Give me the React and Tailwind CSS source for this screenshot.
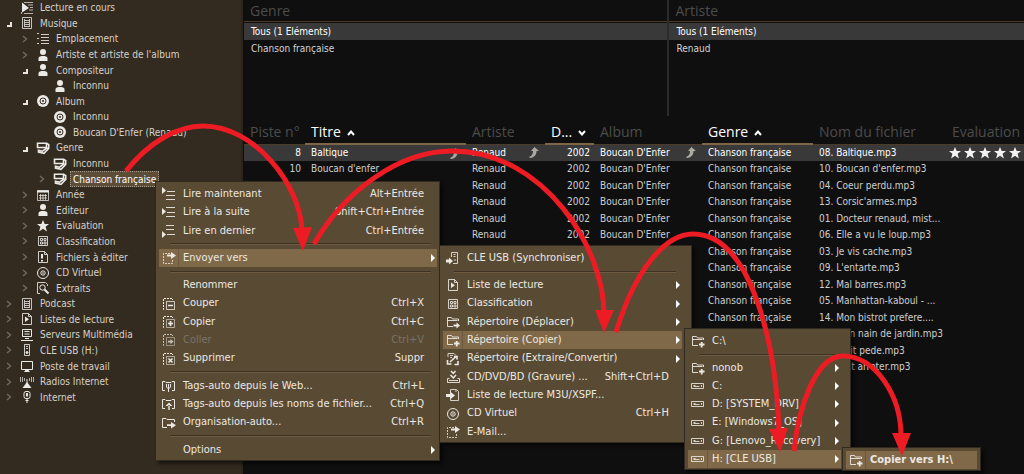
import React from 'react'
import clsx from 'clsx'

const icons = {
  playing: (
    <>
      <path d="M4 1.500h9M8 4h5M10 6.500h3M9 9h4M4 12.500h9M1.500 11v2" opacity=".7" />
      <path d="M2 1.500 9 7l-7 4.500z" fill="currentColor" stroke="none" />
    </>
  ),
  library: <path d="M2.500 1.500h9v11h-9zM5 4.500h4M5 6.500h4M5 8.500h4M5 10.500h4M4.500 3v8M9.500 3v8" opacity=".8" />,
  list: <path d="M1 1.500h2M1 6.500h2M1 11.500h2M5 2.500h8M5 5.500h8M5 8.500h8M5 11.500h8" opacity=".85" />,
  person: (
    <g fill="currentColor" stroke="none">
      <circle cx="7" cy="4" r="3" />
      <path d="M2.500 13v-2.500C2.500 8.500 5 8 7 8s4.500.5 4.500 2.500V13z" />
    </g>
  ),
  disc: (
    <>
      <circle cx="7" cy="7" r="6" fill="currentColor" stroke="none" />
      <circle cx="7" cy="7" r="3" className="stroke-[#332b20]" />
      <circle cx="7" cy="7" r="1" className="fill-[#332b20] stroke-none" />
    </>
  ),
  tag: (
    <>
      <path d="M1.500 2.200h9v4.300h-9z" strokeWidth="1.600" />
      <path d="m10.500 2.500 2.200 1v4L8 12.300 2.500 11V9.200l4 1 5-3.700" strokeWidth="1.600" />
    </>
  ),
  calendar: (
    <>
      <path d="M1.500 2.500h11v10h-11zM3 7.500h8M3 10h8M4.500 6v6M7 6v6M9.500 6v6" opacity=".75" />
      <path d="M1 3.500h12" strokeWidth="2" />
    </>
  ),
  star: <path d="m7 1 1.700 4h4.300L9.600 7.800l1.300 4.700L7 9.800l-3.900 2.700 1.300-4.700L1 5h4.300z" fill="currentColor" stroke="none" />,
  grid: <path d="M2.500 2.500h9v9h-9zM4.500 4.500h2v2h-2zM8 4.500h2v2H8zM4.500 8h2v2h-2zM8 8h2v2H8z" opacity=".85" />,
  edit: (
    <>
      <path d="M2.500 1.500h6l3 3v8h-9zM8.500 1.500v3h3" opacity=".85" />
      <path d="M6 4v4.500M6 10v1.500" strokeWidth="2" />
    </>
  ),
  cd: (
    <>
      <circle cx="7" cy="7" r="5.500" />
      <circle cx="7" cy="7" r="2.200" />
      <circle cx="7" cy="7" r=".8" fill="currentColor" stroke="none" />
    </>
  ),
  search: (
    <>
      <path d="M4 12.500H1.500v-11h8l2 2V5" opacity=".85" />
      <circle cx="6.500" cy="6.500" r="2.700" />
      <path d="m8.500 8.500 4 4" strokeWidth="2" />
    </>
  ),
  playlist: (
    <>
      <path d="M2.500 1.500h6l3 3v8h-9zM8.500 1.500v3h3" opacity=".85" />
      <path d="m5 4.500 4 2.800L5 10z" fill="currentColor" stroke="none" />
    </>
  ),
  server: <path d="M2.500 1.500h9v7h-9zM4.500 3.500h5M4.500 6h5M5 10.500h4M1 12.500h12" />,
  usb: (
    <>
      <path d="M4.500 1.500h5v11h-5zM6 3.500h2M6 5.500h2" opacity=".85" />
      <circle cx="7" cy="9.500" r="1" fill="currentColor" />
    </>
  ),
  screen: (
    <>
      <path d="M1.500 2.500h11v8h-11z" />
      <path d="M4 13h6l-1.500-2h-3z" fill="currentColor" stroke="none" />
    </>
  ),
  radio: (
    <>
      <path d="M.5 2v5M2.500 2v5M4.500 3v3M9.500 3v3M11.500 2v5M13.500 2v5" opacity=".7" />
      <path d="M7 4v4" />
      <path d="m2.500 13 4.500-6 4.500 6z" fill="currentColor" stroke="none" />
    </>
  ),
  plug: (
    <>
      <rect x="4" y="1.500" width="6" height="7" rx="2" />
      <path d="M6.500 3v3.500M7.500 3v3.500M5.500 10.500h3M7 9v4" />
    </>
  ),
  playNow: (
    <>
      <path d="M5 4.500h8M4 8.500h9M4 12.500h9" opacity=".9" />
      <path d="m0 0 4 3.500L0 7z" fill="currentColor" stroke="none" />
    </>
  ),
  playNext: (
    <>
      <path d="M4 2.500h9M5 7.500h8M4 11.500h9" opacity=".9" />
      <path d="m0 3 4 3.500L0 10z" fill="currentColor" stroke="none" />
    </>
  ),
  playLast: (
    <>
      <path d="M4 1.500h8M4 5.500h8M5 10.500h8" opacity=".9" />
      <path d="m0 7 4 3.500L0 14z" fill="currentColor" stroke="none" />
    </>
  ),
  send: (
    <>
      <path d="M8 2.500H1.500v10h9V8" strokeDasharray="2 1" opacity=".8" />
      <path d="M5 3.500h4V1l5 3.500L9 8V5.500H5z" fill="currentColor" stroke="none" />
    </>
  ),
  cut: (
    <>
      <path d="M2 12.500h-.5v-11h9V3" strokeDasharray="2 1" />
      <path d="M4.500 4.500h8v8h-8z" opacity=".8" />
      <path d="M6 8.500h5" strokeWidth="1.500" />
    </>
  ),
  copy: (
    <>
      <path d="M2 12.500h-.5v-11h9V3" strokeDasharray="2 1" />
      <path d="M4.500 4.500h8v8h-8z" opacity=".6" />
      <path d="M6 8.500h5M8.500 6v5" strokeWidth="1.700" />
    </>
  ),
  paste: (
    <>
      <path d="M2 12.500h-.5v-11h9V3" strokeDasharray="2 1" />
      <path d="M4.500 4.500h8v8h-8z" opacity=".6" />
      <path d="M6 7.800h2.500V6l3 2.600-3 2.600V9.400H6z" fill="currentColor" stroke="none" />
    </>
  ),
  remove: (
    <>
      <path d="M2 12.500h-.5v-11h9V3" strokeDasharray="2 1" />
      <path d="M4.500 4.500h8v8h-8z" opacity=".6" />
      <path d="m6.500 6.500 4 4M10.500 6.500l-4 4" strokeWidth="1.600" />
    </>
  ),
  tagWeb: (
    <>
      <path d="M3 11.500H.5v-9H3l1 1h5l1-1h2.500v9H10" />
      <path d="M4.500 5v3l2 2 2-2V5M6.500 5v8" />
    </>
  ),
  tagFile: (
    <>
      <path d="M3 11.500H.5v-9H3l1 1h5l1-1h2.500v9H10" />
      <path d="M3.500 9 7 5.500 10.500 9zM6.300 8v5h1.400V8z" fill="currentColor" stroke="none" />
    </>
  ),
  organize: (
    <>
      <path d="M5 11.500H.5v-9H4l1 1h7.500V6" />
      <path d="M5 8.300h4V6l5 3.200-5 3.300V10H5z" fill="currentColor" stroke="none" />
    </>
  ),
  usbSync: (
    <>
      <path d="M5.500 6V1.500h6v11H7M7.500 3.500h2M7.500 5.500h2M9 8v2" opacity=".85" />
      <path d="M0 8.500h3V6.500l4 3.500-4 3.500v-2H0z" fill="currentColor" stroke="none" />
    </>
  ),
  folderMove: (
    <>
      <path d="M7 11.500H1.500v-9h4l1 1.500h6v2M1.500 5.500h10" opacity=".9" />
      <path d="M7.500 9.500h3V7.500l3.500 3-3.500 3v-2h-3z" fill="currentColor" stroke="none" />
    </>
  ),
  folderCopy: (
    <>
      <path d="M7 11.500H1.500v-9h4l1 1.500h6v2M1.500 5.500h10" opacity=".9" />
      <path d="M8 10.500h5.500M10.700 8v5.500" strokeWidth="1.800" />
    </>
  ),
  convert: (
    <>
      <path d="M2 5V1.500h6l2 2M4 3.500h3M4 5.500h2" opacity=".85" />
      <path d="m4 10 6-5.500M8 4.500h3v3M1.500 8v4h4M8.500 12.500H12V9" strokeWidth="1.600" />
    </>
  ),
  burn: (
    <>
      <path d="M3.500 8.500h-2v4h12v-4h-2M3 10.500h9" opacity=".9" />
      <path d="m4.500 5 2.800 3L10 5M5 1l2.300 2.500L9.500 1" strokeWidth="1.500" />
    </>
  ),
  exportList: (
    <>
      <path d="M4.500 4V1.500h6l2 2v9h-8V11M10 1.500V4" opacity=".85" />
      <path d="M0 6h4V3.500l5 4-5 4V9H0z" fill="currentColor" stroke="none" />
    </>
  ),
  drive: <path d="M.5 4.500h12v5H.5zM2.500 7.500h6M10.500 6v2M2.500 6.500h2" opacity=".85" />,
}

function Icon({ name }) {
  return (
    <svg viewBox="0 0 14 14" className="h-3.5 w-3.5 shrink-0" fill="none" stroke="currentColor" aria-hidden="true">
      {icons[name]}
    </svg>
  )
}

const tree = [
  { label: 'Lecture en cours', icon: 'playing', level: 0 },
  { label: 'Musique', icon: 'library', level: 0, state: 'open' },
  { label: 'Emplacement', icon: 'list', level: 1, state: 'closed' },
  { label: "Artiste et artiste de l'album", icon: 'person', level: 1, state: 'closed' },
  { label: 'Compositeur', icon: 'person', level: 1, state: 'open' },
  { label: 'Inconnu', icon: 'person', level: 2 },
  { label: 'Album', icon: 'disc', level: 1, state: 'open' },
  { label: 'Inconnu', icon: 'disc', level: 2 },
  { label: "Boucan D'Enfer (Renaud)", icon: 'disc', level: 2 },
  { label: 'Genre', icon: 'tag', level: 1, state: 'open' },
  { label: 'Inconnu', icon: 'tag', level: 2 },
  { label: 'Chanson française', icon: 'tag', level: 2, state: 'closed', selected: true },
  { label: 'Année', icon: 'calendar', level: 1, state: 'closed' },
  { label: 'Editeur', icon: 'person', level: 1, state: 'closed' },
  { label: 'Evaluation', icon: 'star', level: 1, state: 'closed' },
  { label: 'Classification', icon: 'grid', level: 1, state: 'closed' },
  { label: 'Fichiers à éditer', icon: 'edit', level: 1, state: 'closed' },
  { label: 'CD Virtuel', icon: 'cd', level: 1, state: 'closed' },
  { label: 'Extraits', icon: 'search', level: 1, state: 'closed' },
  { label: 'Podcast', icon: 'library', level: 0, state: 'closed' },
  { label: 'Listes de lecture', icon: 'playlist', level: 0, state: 'closed' },
  { label: 'Serveurs Multimédia', icon: 'server', level: 0, state: 'closed' },
  { label: 'CLE USB (H:)', icon: 'usb', level: 0, state: 'closed' },
  { label: 'Poste de travail', icon: 'screen', level: 0, state: 'closed' },
  { label: 'Radios Internet', icon: 'radio', level: 0, state: 'closed' },
  { label: 'Internet', icon: 'plug', level: 0, state: 'closed' },
]

const indent = ['pl-px', 'pl-[17px]', 'pl-[34px]']

const tracks = [
  { no: 8, title: 'Baltique', file: '08. Baltique.mp3' },
  { no: 10, title: "Boucan d'enfer", file: "10. Boucan d'enfer.mp3" },
  { no: 4, title: 'Coeur perdu', file: '04. Coeur perdu.mp3' },
  { no: 13, title: "Corsic'armes", file: "13. Corsic'armes.mp3" },
  { no: 1, title: 'Docteur renaud', file: '01. Docteur renaud, mist...' },
  { no: 6, title: 'Elle a vu le loup', file: '06. Elle a vu le loup.mp3' },
  { no: 3, title: 'Je vis cache', file: '03. Je vis cache.mp3' },
  { no: 9, title: "L'entarte", file: "09. L'entarte.mp3" },
  { no: 12, title: 'Mal barres', file: '12. Mal barres.mp3' },
  { no: 5, title: 'Manhattan-kaboul', file: '05. Manhattan-kaboul - ...' },
  { no: 14, title: 'Mon bistrot prefere', file: '14. Mon bistrot prefere....' },
  { no: 7, title: 'Mon nain de jardin', file: '07. Mon nain de jardin.mp3' },
  { no: 11, title: 'Petit pede', file: '11. Petit pede.mp3' },
  { no: 2, title: 'Tout arreter', file: '02. Tout arreter.mp3' },
]

const columns = [
  { label: 'Piste n°', width: 'w-[61px]' },
  { label: 'Titre', width: 'w-[161px]', sort: 'up' },
  { label: 'Artiste', width: 'w-[79px]' },
  { label: 'D...', width: 'w-[49px]', sort: 'down' },
  { label: 'Album', width: 'w-[108px]' },
  { label: 'Genre', width: 'w-[111px]', sort: 'up' },
  { label: 'Nom du fichier', width: 'w-[133px]' },
  { label: 'Evaluation', width: '' },
]

const mainMenu = [
  { label: 'Lire maintenant', icon: 'playNow', keys: 'Alt+Entrée' },
  { label: 'Lire à la suite', icon: 'playNext', keys: 'Shift+Ctrl+Entrée' },
  { label: 'Lire en dernier', icon: 'playLast', keys: 'Ctrl+Entrée' },
  null,
  { label: 'Envoyer vers', icon: 'send', sub: true, active: true },
  null,
  { label: 'Renommer' },
  { label: 'Couper', icon: 'cut', keys: 'Ctrl+X' },
  { label: 'Copier', icon: 'copy', keys: 'Ctrl+C' },
  { label: 'Coller', icon: 'paste', keys: 'Ctrl+V', disabled: true },
  { label: 'Supprimer', icon: 'remove', keys: 'Suppr' },
  null,
  { label: 'Tags-auto depuis le Web...', icon: 'tagWeb', keys: 'Ctrl+L' },
  { label: 'Tags-auto depuis les noms de fichier...', icon: 'tagFile', keys: 'Ctrl+Q' },
  { label: 'Organisation-auto...', icon: 'organize', keys: 'Ctrl+R' },
  null,
  { label: 'Options', sub: true },
]

const sendMenu = [
  { label: 'CLE USB (Synchroniser)', icon: 'usbSync' },
  null,
  { label: 'Liste de lecture', icon: 'playlist', sub: true },
  { label: 'Classification', icon: 'grid', sub: true },
  { label: 'Répertoire (Déplacer)', icon: 'folderMove', sub: true },
  { label: 'Répertoire (Copier)', icon: 'folderCopy', sub: true, active: true },
  { label: 'Répertoire (Extraire/Convertir)', icon: 'convert', sub: true },
  { label: 'CD/DVD/BD (Gravure) ...', icon: 'burn', keys: 'Shift+Ctrl+D' },
  { label: 'Liste de lecture M3U/XSPF...', icon: 'exportList' },
  { label: 'CD Virtuel', icon: 'cd', keys: 'Ctrl+H' },
  { label: 'E-Mail...', icon: 'send' },
]

const driveMenu = [
  { label: 'C:\\', icon: 'folderCopy' },
  null,
  { label: 'nonob', icon: 'folderCopy', sub: true },
  { label: 'C:', icon: 'drive', sub: true },
  { label: 'D: [SYSTEM_DRV]', icon: 'drive', sub: true },
  { label: 'E: [Windows7_OS]', icon: 'drive', sub: true },
  { label: 'G: [Lenovo_Recovery]', icon: 'drive', sub: true },
  { label: 'H: [CLE USB]', icon: 'drive', sub: true, active: true },
]

const copyMenu = [{ label: 'Copier vers H:\\', icon: 'folderCopy', active: true, bold: true }]

function Chevron({ state }) {
  return (
    <span className="flex w-[15px] shrink-0 justify-center">
      {state === 'closed' && (
        <svg viewBox="0 0 6 8" className="h-2 w-1.5" fill="none" stroke="#6e675d" strokeWidth="1.500">
          <path d="m1 1 3.500 3L1 7" />
        </svg>
      )}
      {state === 'open' && (
        <svg viewBox="0 0 6 6" className="mt-0.5 h-1.5 w-1.5" fill="none" stroke="#e8e6e2" strokeWidth="2">
          <path d="M5 1v4H1" />
        </svg>
      )}
    </span>
  )
}

function Sidebar() {
  return (
    <nav className="w-[243px] shrink-0 border-r-2 border-[#2b241b] bg-[#332b20]">
      <ul className="grid h-[405px] auto-rows-fr text-[10px] text-[#d6d2cb]">
        {tree.map((item, i) => (
          <li key={i} className="flex min-h-0">
            <button className={clsx('flex w-full items-center gap-1', indent[item.level])}>
              <Chevron state={item.state} />
              <span className="text-[#eceae6]"><Icon name={item.icon} /></span>
              <span
                className={clsx(
                  'flex h-full items-center whitespace-nowrap',
                  item.selected ? '-ml-px border border-dotted border-[#a39a8b] bg-[#5e4d36] px-0.5 text-white' : 'px-0.5'
                )}
              >
                {item.label}
              </span>
            </button>
          </li>
        ))}
      </ul>
    </nav>
  )
}

function FilterPanel({ title, rows }) {
  return (
    <section>
      <h2 className="h-[22px] border-b border-[#4b3c28] px-1.5 font-['Open_Sans',sans-serif] text-sm leading-[22px] text-[#4c4c4c]">{title}</h2>
      <div className="mt-px text-[10px] text-[#d4d4d4]">
        {rows.map((row, i) => (
          <button
            key={row}
            className={clsx('block h-[17px] w-full px-[7px] text-left leading-[17px]', i === 0 && 'bg-[#393939] text-white')}
          >
            {row}
          </button>
        ))}
      </div>
    </section>
  )
}

function LinkArrow() {
  return (
    <svg viewBox="0 0 10 11" className="h-[11px] w-2.5" fill="#aaa9a2">
      <path d="M5.500 0 10 4H7.500c0 4-2 6.500-6.500 7l-1-1c3-1 4-3 4-6H2z" />
    </svg>
  )
}

function Linked({ children, show }) {
  return (
    <span className="flex items-center justify-between pr-1.5">
      {children}
      {show && <LinkArrow />}
    </span>
  )
}

function TrackTable() {
  return (
    <table className="w-full table-fixed border-collapse text-left text-[10px] text-[#cfcfcf]">
      <thead>
        <tr className="h-7">
          {columns.map((col) => (
            <th
              key={col.label}
              className={clsx(
                "whitespace-nowrap pt-1 pl-1.5 font-['Open_Sans',sans-serif] text-sm leading-5 font-normal",
                col.width,
                col.sort ? 'border-b-2 border-[#7d6545] text-white' : 'border-b border-[#4b3c28] text-[#4c4c4c]'
              )}
            >
              {col.label}
              {col.sort && (
                <svg viewBox="0 0 8 6" className={clsx('ml-1.5 inline h-1.5 w-2', col.sort === 'down' && 'rotate-180')} fill="none" stroke="currentColor" strokeWidth="2">
                  <path d="m1 5 3-3.500L7 5" />
                </svg>
              )}
            </th>
          ))}
        </tr>
      </thead>
      <tbody>
        {tracks.map((t, i) => (
          <tr key={t.no} className={clsx('whitespace-nowrap leading-4', i % 2 ? 'h-4' : 'h-[17px]', i === 0 && 'bg-[#393939] text-white')}>
            <td className="pr-1 text-right">{t.no}</td>
            <td className="pl-1.5"><Linked show={i === 0}>{t.title}</Linked></td>
            <td className="pl-1.5"><Linked show={i === 0}>Renaud</Linked></td>
            <td className="pr-1 text-right">2002</td>
            <td className="pl-1.5"><Linked show={i === 0}>Boucan D'Enfer</Linked></td>
            <td className="pl-1.5">Chanson française</td>
            <td className="pl-1.5">{t.file}</td>
            <td className="pl-0.5">
              {i === 0 && (
                <span className="flex gap-px text-[#f2f2f2]">
                  {[1, 2, 3, 4, 5].map((n) => <Icon key={n} name="star" />)}
                </span>
              )}
            </td>
          </tr>
        ))}
      </tbody>
    </table>
  )
}

function Menu({ items, className }) {
  return (
    <div
      role="menu"
      className={clsx('absolute flex flex-col border border-[#302a20] bg-[#594a33] pt-[3px] pb-px pl-[3px] text-[11px] text-[#ece9e4] shadow-[3px_3px_3px_rgba(0,0,0,0.5)]', className)}
    >
      {items.map((item, i) =>
        item === null ? (
          <div key={i} className="flex h-[9px] shrink-0 items-center pr-1.5 pl-[11px]">
            <hr className="h-0.5 w-full border-t border-b border-t-[#3d3224] border-b-[#6f5c40]" />
          </div>
        ) : (
          <button
            key={i}
            role="menuitem"
            disabled={item.disabled}
            className={clsx(
              'relative flex min-h-0 flex-1 items-center pr-[13px] text-left whitespace-nowrap',
              item.active && 'bg-[#806948]',
              item.disabled && 'text-[#77736c]',
              item.bold && 'font-bold'
            )}
          >
            <span className={clsx('flex h-full w-5 shrink-0 items-center justify-center border-r', item.active ? 'border-[#6d5a3e]' : 'border-transparent')}>
              {item.icon && <span className={clsx(item.disabled && 'text-[#c5c0b8]')}><Icon name={item.icon} /></span>}
            </span>
            <span className="flex-1 pl-1">{item.label}</span>
            {item.keys && <span>{item.keys}</span>}
            {item.sub && (
              <svg viewBox="0 0 4 8" className="absolute right-0.5 h-2 w-1" fill="white">
                <path d="m0 0 4 4-4 4z" />
              </svg>
            )}
          </button>
        )
      )}
    </div>
  )
}

// red guide arrows that lead from one menu to the next
function GuideArrows() {
  return (
    <svg width="1024" height="474" className="pointer-events-none absolute top-0 left-0" fill="none" stroke="#ed1c24" strokeWidth="5">
      <path d="M126 171C150 141 178 126 203 126c52 0 97 59 99 104" />
      <path d="M314 244c31-54 86-93 138-93 93 0 152 98 152 163" />
      <path d="M616 332c19-62 49-98 77-98 57 0 83 106 86 198" />
      <path d="M794 451c4-41 21-95 49-95 32 0 58 39 58 80" />
      <g fill="#ed1c24" stroke="none">
        <path d="M293 228l19-1-9 24z" />
        <path d="M595 310h19l-10 23z" />
        <path d="M769 429l19-1-8 24z" />
        <path d="M892 433h19l-9 23z" />
      </g>
    </svg>
  )
}

function App() {
  return (
    <div className="relative flex min-h-screen overflow-hidden bg-[#0f0f0f] font-['DejaVu_Sans_Condensed','DejaVu_Sans',sans-serif]">
      <Sidebar />
      <main className="min-w-0 flex-1 pl-px">
        <div className="grid h-[116px] grid-cols-[6fr_5fr]">
          <div className="border-r-2 border-[#2b2b2b]">
            <FilterPanel title="Genre" rows={['Tous (1 Eléments)', 'Chanson française']} />
          </div>
          <FilterPanel title="Artiste" rows={['Tous (1 Eléments)', 'Renaud']} />
        </div>
        <TrackTable />
      </main>
      <Menu items={mainMenu} className="top-[181px] left-[155px] h-[280px] w-[285px] pr-0.5" />
      <Menu items={sendMenu} className="top-[245px] left-[439px] h-[198px] w-[253px] pr-[9px]" />
      <Menu items={driveMenu} className="top-[328px] left-[684px] h-[142px] w-[167px] pr-[9px]" />
      <Menu items={copyMenu} className="top-[447px] left-[842px] h-6 w-[139px] pr-[3px]" />
      <GuideArrows />
    </div>
  )
}

export default App
